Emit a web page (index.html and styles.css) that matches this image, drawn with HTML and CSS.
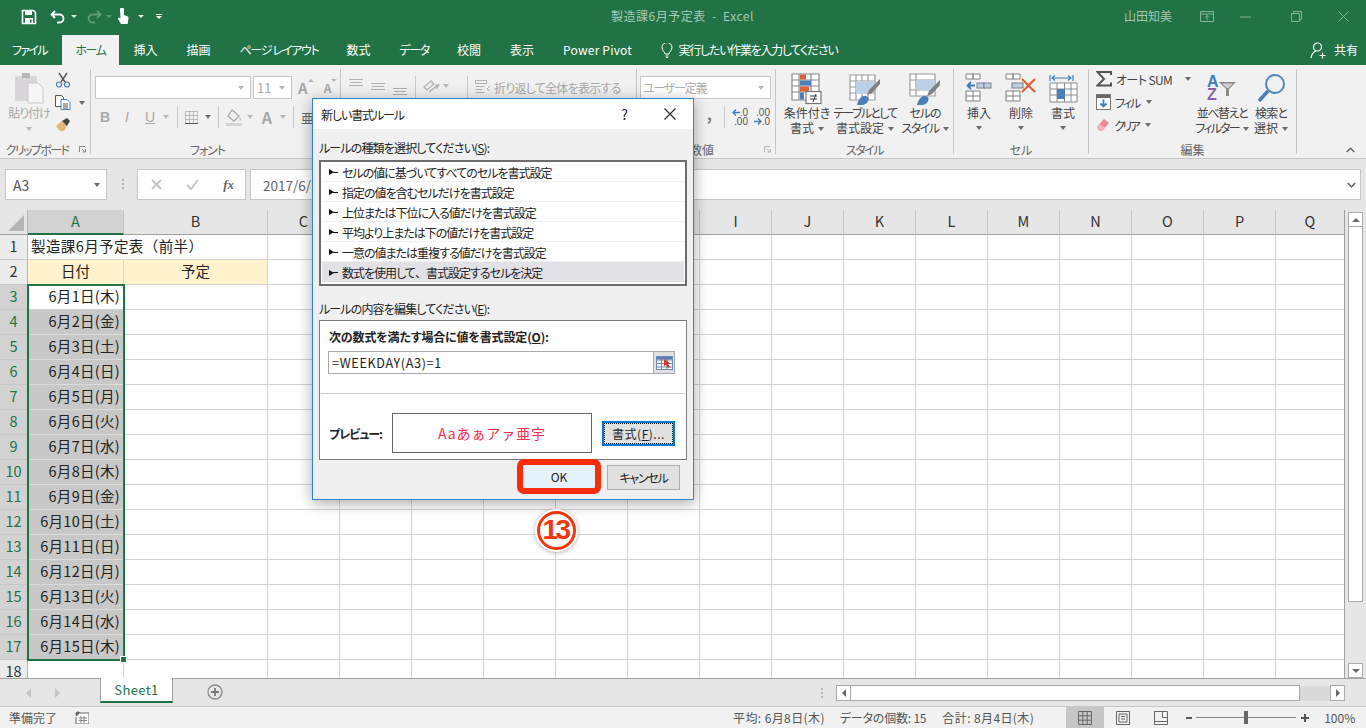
FILE: index.html
```html
<!DOCTYPE html>
<html lang="ja">
<head>
<meta charset="utf-8">
<title>製造課6月予定表 - Excel</title>
<link rel="stylesheet" href="styles.css">
</head>
<body>
<div class="app">

<header class="titlebar">
  <div class="qat">
    <svg class="q-save" width="16" height="16" viewBox="0 0 16 16"><path d="M1.5 1.5h11l2 2v11h-13z" fill="none" stroke="#fff" stroke-width="1.6"/><rect x="4" y="2" width="7" height="4" fill="#fff"/><rect x="4" y="9" width="8" height="6" fill="#fff"/><rect x="9" y="10.5" width="1.6" height="3" fill="#217346"/></svg>
    <svg class="q-undo" width="16" height="14" viewBox="0 0 16 14"><path d="M5 1L1.5 4.5 5 8M2 4.5h7.5a4 4 0 0 1 0 8H7" fill="none" stroke="#fff" stroke-width="1.8"/></svg>
    <span class="tcaret q-c1"></span>
    <svg class="q-redo" width="16" height="14" viewBox="0 0 16 14"><path d="M11 1l3.500 3.500L11 8M14 4.500H6.500a4 4 0 0 0 0 8H9" fill="none" stroke="#5d9c7b" stroke-width="1.800"/></svg>
    <span class="tcaret dim q-c2"></span>
    <svg class="q-touch" width="13" height="17" viewBox="0 0 13 17"><path d="M3 1.500a2 2 0 0 1 4 0V7l4 1.500.6 1.500-1 6H4L.8 10.500 2 9.500l1.500 1z" fill="#fff"/></svg>
    <span class="tcaret q-c3"></span>
    <span class="q-more"></span>
  </div>
  <div class="doc-title">製造課6月予定表&nbsp; - &nbsp;Excel</div>
  <div class="win-area">
    <span class="user">山田知美</span>
    <svg class="w-a" width="14" height="11" viewBox="0 0 14 11"><path d="M.5.5h13v10H.5zM.5 3h13M7 9V4.500M5 6.500l2-2 2 2" fill="none" stroke="#84b399"/></svg>
    <svg class="w-b" width="11" height="2" viewBox="0 0 11 2"><path d="M0 1h11" stroke="#84b399"/></svg>
    <svg class="w-c" width="11" height="11" viewBox="0 0 11 11"><path d="M.5 2.500h8v8h-8zM2.500 2.500v-2h8v8h-2" fill="none" stroke="#84b399"/></svg>
    <svg class="w-d" width="11" height="11" viewBox="0 0 11 11"><path d="M.5.500l10 10M10.500.500l-10 10" fill="none" stroke="#84b399"/></svg>
  </div>
</header>

<nav class="tabs">
  <span class="tab tab-file">ファイル</span>
  <span class="tab tab-active">ホーム</span>
  <span class="tab">挿入</span>
  <span class="tab">描画</span>
  <span class="tab tab-kana">ページ レイアウト</span>
  <span class="tab">数式</span>
  <span class="tab tab-kana">データ</span>
  <span class="tab">校閲</span>
  <span class="tab">表示</span>
  <span class="tab tab-pp">Power Pivot</span>
  <span class="tell">
    <svg width="12" height="15" viewBox="0 0 12 15"><path d="M4 11c0-2-3-3.500-3-6.500a5 5 0 0 1 10 0C11 7.500 8 9 8 11zM4.500 13h3M5 14.500h2" fill="none" stroke="#fff"/></svg>
    <span class="tell-text">実行したい作業を入力してください</span>
  </span>
  <span class="share">
    <svg width="17" height="17" viewBox="0 0 17 17"><circle cx="7.500" cy="5" r="4" fill="none" stroke="#fff" stroke-width="1.200"/><path d="M1 16c.5-4 2.500-6 5-7M12.500 10.500v6M9.500 13.500h6" fill="none" stroke="#fff" stroke-width="1.200"/></svg>
    共有
  </span>
</nav>

<section class="ribbon">

  <div class="group g-clip">
    <div class="group-body clip-body">
      <div class="big paste">
        <svg width="30" height="32" viewBox="0 0 30 32"><rect x="1" y="4" width="22" height="25" fill="#d8d6d8"/><rect x="8" y="1" width="8" height="5" fill="#b9b7b9"/><path d="M14 11h10l5 5v15H14z" fill="#f6f6f6" stroke="#c9c9c9"/></svg>
        <span class="lbl dis ls-10">貼り付け</span>
        <span class="caret dis-c paste-c"></span>
      </div>
      <div class="clip-tools">
        <svg width="16" height="16" viewBox="0 0 16 16"><path d="M4 1l6 9M12 1L6 10" stroke="#555" stroke-width="1.400" fill="none"/><circle cx="4" cy="12.500" r="2.500" fill="none" stroke="#4a7fb5" stroke-width="1.200"/><circle cx="12" cy="12.500" r="2.500" fill="none" stroke="#4a7fb5" stroke-width="1.200"/></svg>
        <div class="copy-row">
          <svg width="16" height="15" viewBox="0 0 16 15"><path d="M.5.500h6l2 2v9h-8z" fill="#fff" stroke="#555"/><path d="M6 4.500h6l3 3v7H6z" fill="#fff" stroke="#4a7fb5"/><path d="M8 9h5M8 11h5M8 13h5" stroke="#555"/></svg>
          <span class="caret copy-c"></span>
        </div>
        <svg width="16" height="15" viewBox="0 0 16 15"><path d="M1 9l6-5 5 5-3 5H5z" fill="#e5b777"/><path d="M7 4l5 5 3-5-3-3z" fill="#444"/></svg>
      </div>
    </div>
    <div class="group-label pad-exp ls-16">クリップボード</div>
    <svg class="expander" width="7" height="7" viewBox="0 0 7 7"><path d="M.5 6V.5H6M3 3l3 3M3.500 6H6.500V3" fill="none" stroke="#8a8a8a"/></svg>
  </div>

  <div class="group g-font">
    <div class="group-body col">
      <div class="frow">
        <span class="combo c-font"><span class="caret dis-c"></span></span>
        <span class="combo c-size"><span class="size-val">11</span><span class="caret dis-c"></span></span>
        <span class="grow-a">A</span><span class="tiny-up"></span>
        <span class="shrink-a">A</span><span class="tiny-dn"></span>
      </div>
      <div class="frow f2">
        <b class="ib">B</b><i class="ib i2">I</i><u class="ib i3">U</u>
        <span class="caret dis-c m3"></span>
        <span class="vr m8"></span>
        <svg class="m7" width="13" height="13" viewBox="0 0 13 13"><path d="M.5.500h12v12H.5zM4.500.500v12M8.500.500v12M.500 4.500h12M.500 8.500h12" fill="none" stroke="#8c8c8c" stroke-dasharray="1 1"/><path d="M0 12.500h13" stroke="#555"/></svg>
        <span class="caret m7"></span>
        <span class="vr m7"></span>
        <svg class="m7" width="16" height="17" viewBox="0 0 16 17"><path d="M6 1l7 6-5 5-6-5z" fill="none" stroke="#a9a9a9" stroke-width="1.300"/><path d="M14 8c1 2 1.500 3 .5 3.500S13 10 14 8z" fill="#bbb"/><rect y="14" width="16" height="3" fill="#d6d4d6"/></svg>
        <span class="caret dis-c m5"></span>
        <b class="big-a m6">A</b>
        <span class="caret dis-c m5"></span>
        <span class="vr m7"></span>
        <span class="ak m7">亜</span>
      </div>
    </div>
    <div class="group-label pad-exp ls-10">フォント</div>
  </div>

  <div class="group g-align">
    <div class="group-body align-body">
      <svg class="al a1" width="14" height="8" viewBox="0 0 14 8"><path d="M0 .500h14M1 3.500h12M0 6.500h14" stroke="#b0b0b0"/></svg>
      <svg class="al a2" width="14" height="8" viewBox="0 0 14 8"><path d="M0 .500h14M1 3.500h12M0 6.500h14" stroke="#b0b0b0"/></svg>
      <svg class="al a3" width="14" height="8" viewBox="0 0 14 8"><path d="M0 .500h14M1 3.500h12M0 6.500h14" stroke="#b0b0b0"/></svg>
      <span class="vr a-vr"></span>
      <svg class="al a4" width="17" height="15" viewBox="0 0 17 15"><path d="M1 8l7-6 3 3-7 6zM6 13l9-7M13 10l3-4-4 0" fill="none" stroke="#b0b0b0" stroke-width="1.200"/></svg>
      <span class="caret dis-c a5"></span>
      <span class="vr a-vr2"></span>
      <svg class="al a6" width="16" height="14" viewBox="0 0 16 14"><path d="M.500.500h11v3H.500zM.500 6.500h9M.500 9.500h7M.500 12.500h9" fill="none" stroke="#b0b0b0"/><path d="M15 6l-3 3 3 2" fill="none" stroke="#b0b0b0"/></svg>
      <span class="wrap-lbl">折り返して全体を表示する</span>
    </div>
    <div class="group-label pad-exp"></div>
  </div>

  <div class="group g-num">
    <div class="group-body col num-body">
      <span class="combo c-num"><span class="num-val">ユーザー定義</span><span class="caret dis-c"></span></span>
      <div class="num-row">
        <span class="comma">,</span>
        <span class="vr nvr"></span>
        <span class="dec">
          <span class="dec-line"><svg width="8" height="7" viewBox="0 0 8 7"><path d="M8 3.500H1M4 .5L1 3.500l3 3" fill="none" stroke="#3f7cbc" stroke-width="1.300"/></svg>.0</span>
          <span class="dec-line">.00</span>
        </span>
        <span class="dec d2">
          <span class="dec-line">.00</span>
          <span class="dec-line"><svg width="8" height="7" viewBox="0 0 8 7"><path d="M0 3.500h7M4 .5l3 3-3 3" fill="none" stroke="#3f7cbc" stroke-width="1.300"/></svg>.0</span>
        </span>
      </div>
    </div>
    <div class="group-label pad-exp2">数値</div>
    <svg class="expander" width="7" height="7" viewBox="0 0 7 7"><path d="M.5 6V.5H6M3 3l3 3M3.500 6H6.500V3" fill="none" stroke="#b0b0b0"/></svg>
  </div>

  <div class="group g-style">
    <div class="group-body bigs">
      <div class="big b-cond">
        <svg width="32" height="32" viewBox="0 0 32 32"><path d="M1 1h27v26H1zM8 1v26M20 1v26M1 7h27M1 13h27M1 19h27" fill="#fff" stroke="#8a8a8a" stroke-width="1.200"/><rect x="9" y="1.500" width="6" height="5" fill="#d9623b"/><rect x="9" y="7.500" width="11" height="5" fill="#4a7fb8"/><rect x="9" y="13.500" width="9" height="5" fill="#d9623b"/><rect x="9" y="19.500" width="4" height="7" fill="#4a7fb8"/><rect x="15" y="18.500" width="15" height="12" fill="#fff" stroke="#777" stroke-width="1.200"/><path d="M19 23h7M19 26h7M25 21l-3 8" stroke="#333" fill="none"/></svg>
        <span class="lbl">条件付き</span>
        <span class="lbl">書式<span class="caret lc"></span></span>
      </div>
      <div class="big b-table">
        <svg width="32" height="32" viewBox="0 0 32 32"><path d="M1 2h25v25H1zM7 2v25M13 2v25M19 2v25M1 8h25M1 14h25M1 20h25" fill="#fff" stroke="#9b9b9b" stroke-width="1.200"/><rect x="7" y="8" width="18" height="13" fill="#bcd0e6"/><path d="M31 6L20 17l-2 5 5-2L31 11z" fill="#808080"/><path d="M8 32c1-5 5-10 9-9 3 1 3 3 2 5-1 3-3 3-5 4z" fill="#4a7fb8"/></svg>
        <span class="lbl ls-17">テーブルとして</span>
        <span class="lbl">書式設定<span class="caret lc"></span></span>
      </div>
      <div class="big b-cell">
        <svg width="32" height="32" viewBox="0 0 32 32"><path d="M1 1h25v22H1zM7 1v22M1 7h25M1 17h25" fill="#fff" stroke="#9b9b9b" stroke-width="1.200"/><rect x="7" y="7" width="19" height="10" fill="#bcd0e6"/><path d="M31 7L20 18l-2 5 5-2L31 12z" fill="#808080"/><path d="M8 32c1-5 5-10 9-9 3 1 3 3 2 5-1 3-3 3-5 4z" fill="#4a7fb8"/></svg>
        <span class="lbl ls-10">セルの</span>
        <span class="lbl ls-15">スタイル<span class="caret lc"></span></span>
      </div>
    </div>
    <div class="group-label ls-15">スタイル</div>
  </div>

  <div class="group g-cells">
    <div class="group-body bigs">
      <div class="big b-ins">
        <svg width="28" height="30" viewBox="0 0 28 30"><path d="M1 1h7v5H1zM8 1h7v5H8zM1 18h14v10H1zM8 18v10M1 23h14" fill="#fff" stroke="#808080"/><rect x="12" y="10" width="7" height="5" fill="#bcd0e6" stroke="#808080"/><rect x="19" y="10" width="7" height="5" fill="#bcd0e6" stroke="#808080"/><path d="M10 12.500H3M6 9l-3.500 3.500L6 16" fill="none" stroke="#3f7cbc" stroke-width="1.800"/></svg>
        <span class="lbl">挿入</span>
        <span class="caret bc"></span>
      </div>
      <div class="big b-ins">
        <svg width="32" height="30" viewBox="0 0 32 30"><path d="M1 1h7v5H1zM8 1h7v5H8zM1 18h14v10H1zM8 18v10M1 23h14" fill="#fff" stroke="#808080"/><rect x="7" y="10" width="11" height="5" fill="#bcd0e6" stroke="#808080"/><path d="M17 6l13 13M30 6L17 19" stroke="#d9623b" stroke-width="2.200" fill="none"/></svg>
        <span class="lbl">削除</span>
        <span class="caret bc"></span>
      </div>
      <div class="big b-ins">
        <svg width="29" height="30" viewBox="0 0 29 30"><path d="M1 2v6M24 2v6M3 5h19M6 2.500L3 5l3 2.500M19 2.500L22 5l-3 2.500" fill="none" stroke="#3f7cbc" stroke-width="1.200"/><path d="M1 10h27v19H1zM8 10v19M15.500 10v19M22 10v19M1 16h27M1 22h27" fill="#fff" stroke="#8a8a8a"/><rect x="8" y="16" width="8" height="10" fill="#4a7fb8"/></svg>
        <span class="lbl">書式</span>
        <span class="caret bc"></span>
      </div>
    </div>
    <div class="group-label">セル</div>
  </div>

  <div class="group g-edit">
    <div class="group-body edit-body">
      <div class="edit-col">
        <div class="erow">
          <svg width="16" height="16" viewBox="0 0 16 16"><path d="M15 4V1H1.500l6.500 7-6.500 6.500H15v-3" fill="none" stroke="#555" stroke-width="2"/></svg>
          <span class="lbl ls-06">オート SUM</span><span class="caret auto-c"></span>
        </div>
        <div class="erow">
          <svg width="15" height="16" viewBox="0 0 15 16"><rect x=".5" y=".5" width="14" height="15" fill="#fff" stroke="#777"/><rect x="1" y="1" width="13" height="3" fill="#666"/><path d="M7.500 5.500v7M4.500 9.500l3 3 3-3" fill="none" stroke="#3f7cbc" stroke-width="1.800"/></svg>
          <span class="lbl ls-20">フィル</span><span class="caret e-c"></span>
        </div>
        <div class="erow">
          <svg width="14" height="14" viewBox="0 0 14 14"><path d="M1 9l7-8 5 4-7 8H3z" fill="#ec8a9b"/><path d="M1 9l3-3 5 4-3 3H3z" fill="#f3b4bf"/></svg>
          <span class="lbl ls-25">クリア</span><span class="caret e-c"></span>
        </div>
      </div>
      <div class="big b-sort">
        <svg width="32" height="32" viewBox="0 0 32 32"><text x="1" y="14" class="az-a">A</text><text x="1" y="27" class="az-z">Z</text><path d="M13 9h17l-7 7v7h-3v-7z" fill="#8a8a8a"/><path d="M16 10.500h11l-4.500 4.500h-2z" fill="#d0d0d0"/></svg>
        <span class="lbl ls-14">並べ替えと</span>
        <span class="lbl ls-18">フィルター<span class="caret lc"></span></span>
      </div>
      <div class="big b-find">
        <svg width="30" height="32" viewBox="0 0 30 32"><circle cx="19" cy="11" r="9" fill="none" stroke="#4a86c0" stroke-width="2"/><path d="M12 18L3 28" stroke="#4a7fb0" stroke-width="3.500"/></svg>
        <span class="lbl ls-09">検索と</span>
        <span class="lbl">選択<span class="caret lc"></span></span>
      </div>
    </div>
    <div class="group-label">編集</div>
  </div>

  <svg class="collapse" width="9" height="6" viewBox="0 0 9 6"><path d="M.7 5l3.800-3.800L8.300 5" fill="none" stroke="#666" stroke-width="1.500"/></svg>
</section>

<section class="fbar">
  <div class="namebox"><span>A3</span><span class="caret nb-c"></span></div>
  <div class="fdots"></div>
  <div class="fbtns">
    <svg width="11" height="11" viewBox="0 0 11 11"><path d="M1 1l9 9M10 1l-9 9" stroke="#c4c4c4" stroke-width="1.800"/></svg>
    <svg width="13" height="11" viewBox="0 0 13 11"><path d="M1 6l4 4 7-9" fill="none" stroke="#c4c4c4" stroke-width="2"/></svg>
    <span class="fx">fx</span>
  </div>
  <div class="finput"><span>2017/6/1</span>
    <svg class="fchev" width="9" height="6" viewBox="0 0 9 6"><path d="M.7 1l3.800 3.800L8.300 1" fill="none" stroke="#666" stroke-width="1.600"/></svg>
  </div>
</section>

<section class="main">
  <div class="sheet">
    <div class="colheads">
      <div class="corner"><span></span></div>
      <div class="ch ch-sel">A</div><div class="ch">B</div><div class="ch">C</div><div class="ch"></div><div class="ch"></div><div class="ch"></div><div class="ch"></div><div class="ch"></div><div class="ch">I</div><div class="ch">J</div><div class="ch">K</div><div class="ch">L</div><div class="ch">M</div><div class="ch">N</div><div class="ch">O</div><div class="ch">P</div><div class="ch ch-last">Q</div>
    </div>
    <div class="row"><div class="rh">1</div><div class="cell ca title-cell">製造課6月予定表（前半）</div><div class="cell cb no-l"></div><div class="rest"></div></div>
    <div class="row"><div class="rh">2</div><div class="cell ca hd">日付</div><div class="cell cb hd">予定</div><div class="rest"></div></div>
    <div class="row"><div class="rh sel">3</div><div class="cell ca date">6月1日(木)</div><div class="cell cb"></div><div class="rest"></div></div>
    <div class="row"><div class="rh sel">4</div><div class="cell ca date gray">6月2日(金)</div><div class="cell cb"></div><div class="rest"></div></div>
    <div class="row"><div class="rh sel">5</div><div class="cell ca date gray">6月3日(土)</div><div class="cell cb"></div><div class="rest"></div></div>
    <div class="row"><div class="rh sel">6</div><div class="cell ca date gray">6月4日(日)</div><div class="cell cb"></div><div class="rest"></div></div>
    <div class="row"><div class="rh sel">7</div><div class="cell ca date gray">6月5日(月)</div><div class="cell cb"></div><div class="rest"></div></div>
    <div class="row"><div class="rh sel">8</div><div class="cell ca date gray">6月6日(火)</div><div class="cell cb"></div><div class="rest"></div></div>
    <div class="row"><div class="rh sel">9</div><div class="cell ca date gray">6月7日(水)</div><div class="cell cb"></div><div class="rest"></div></div>
    <div class="row"><div class="rh sel">10</div><div class="cell ca date gray">6月8日(木)</div><div class="cell cb"></div><div class="rest"></div></div>
    <div class="row"><div class="rh sel">11</div><div class="cell ca date gray">6月9日(金)</div><div class="cell cb"></div><div class="rest"></div></div>
    <div class="row"><div class="rh sel">12</div><div class="cell ca date gray">6月10日(土)</div><div class="cell cb"></div><div class="rest"></div></div>
    <div class="row"><div class="rh sel">13</div><div class="cell ca date gray">6月11日(日)</div><div class="cell cb"></div><div class="rest"></div></div>
    <div class="row"><div class="rh sel">14</div><div class="cell ca date gray">6月12日(月)</div><div class="cell cb"></div><div class="rest"></div></div>
    <div class="row"><div class="rh sel">15</div><div class="cell ca date gray">6月13日(火)</div><div class="cell cb"></div><div class="rest"></div></div>
    <div class="row"><div class="rh sel">16</div><div class="cell ca date gray">6月14日(水)</div><div class="cell cb"></div><div class="rest"></div></div>
    <div class="row"><div class="rh sel">17</div><div class="cell ca date gray">6月15日(木)</div><div class="cell cb"></div><div class="rest"></div></div>
    <div class="row"><div class="rh">18</div><div class="cell ca"></div><div class="cell cb"></div><div class="rest"></div></div>
    <div class="selection"><span class="handle"></span></div>
  </div>
  <div class="vscroll">
    <div class="sb-btn"><span class="up"></span></div>
    <div class="sb-thumb"></div>
    <div class="sb-track"></div>
    <div class="sb-btn"><span class="dn"></span></div>
  </div>
</section>

<section class="sheetbar">
  <span class="nav-l"></span><span class="nav-r"></span>
  <div class="sheettab">Sheet1</div>
  <svg class="addsheet" width="16" height="16" viewBox="0 0 16 16"><circle cx="8" cy="8" r="7" fill="none" stroke="#8a8a8a" stroke-width="1.300"/><path d="M8 4v8M4 8h8" stroke="#777" stroke-width="1.800"/></svg>
  <div class="hdots"></div>
  <div class="hscroll">
    <div class="hbtn"><span class="lt"></span></div>
    <div class="hthumb"></div>
    <div class="htrack"></div>
    <div class="hbtn"><span class="rt"></span></div>
  </div>
</section>

<footer class="status">
  <span class="ready">準備完了</span>
  <svg class="macro" width="14" height="13" viewBox="0 0 14 13"><circle cx="3" cy="3" r="2.500" fill="#666"/><path d="M5 2h9v11H1V6" fill="#fff" stroke="#666"/><path d="M4 7h8M4 9.500h8M6 5v7M9 5v7" stroke="#888"/></svg>
  <span class="stat s1">平均: 6月8日(木)</span>
  <span class="stat s2">データの個数: 15</span>
  <span class="stat s3">合計: 8月4日(木)</span>
  <span class="view view-on"><svg width="14" height="14" viewBox="0 0 14 14"><path d="M.5.500h13v13H.5zM4.800.500v13M9.200.500v13M.500 4.800h13M.500 9.200h13" fill="none" stroke="#666"/></svg></span>
  <span class="view"><svg width="14" height="14" viewBox="0 0 14 14"><path d="M.5.500h13v13H.5zM3 3h8v8H3zM5 5.500h4M5 8h4" fill="none" stroke="#666"/></svg></span>
  <span class="view"><svg width="14" height="14" viewBox="0 0 14 14"><path d="M.5.500h13v13H.5zM.500 10.500h13M8.500.500v6h5" fill="none" stroke="#666"/></svg></span>
  <span class="zminus"></span>
  <span class="zslider"><span class="zthumb"></span></span>
  <span class="zplus"></span>
  <span class="zoomval">100%</span>
</footer>

</div>

<div class="dialog">
  <div class="dlg-title">
    <span class="dlg-name">新しい書式ルール</span>
    <span class="dlg-help">?</span>
    <svg class="dlg-close" width="12" height="12" viewBox="0 0 12 12"><path d="M.5.500l11 11M11.500.500l-11 11" stroke="#222" stroke-width="1.100"/></svg>
  </div>
  <div class="dlg-body">
    <div class="dlg-label l-top">ルールの種類を選択してください(<u>S</u>):</div>
    <ul class="rule-list">
      <li><span class="arr"></span>セルの値に基づいてすべてのセルを書式設定</li>
      <li><span class="arr"></span>指定の値を含むセルだけを書式設定</li>
      <li><span class="arr"></span>上位または下位に入る値だけを書式設定</li>
      <li><span class="arr"></span>平均より上または下の値だけを書式設定</li>
      <li><span class="arr"></span>一意の値または重複する値だけを書式設定</li>
      <li class="picked"><span class="arr"></span>数式を使用して<span class="fw">、</span>書式設定するセルを決定</li>
    </ul>
    <div class="dlg-label l-edit">ルールの内容を編集してください(<u>E</u>):</div>
    <div class="rule-box">
      <div class="formula-label">次の数式を満たす場合に値を書式設定(<u>O</u>):</div>
      <div class="formula-input">
        <span class="formula-text">=WEEKDAY(A3)=1</span>
        <span class="ref-btn"><svg width="17" height="14" viewBox="0 0 17 14"><rect x=".5" y=".5" width="16" height="13" fill="#fff" stroke="#6a8cb5"/><path d="M.5 4h16M.500 7.500h16M.500 11h16M5.500 1v12M11 1v12" stroke="#6a8cb5"/><rect x="1" y="1" width="15" height="2.500" fill="#5a7fae"/><path d="M8 3l6 4-2 1 2 3-2 1-2-3-2 1z" fill="#d23b2e"/></svg></span>
      </div>
      <div class="rule-sep"></div>
      <div class="preview-row">
        <span class="preview-label">プレビュー:</span>
        <span class="preview-box">Aaあぁアァ亜宇</span>
        <span class="fmt-btn"><span>書式(<u>F</u>)...</span></span>
      </div>
    </div>
    <div class="dlg-actions">
      <span class="btn ok">OK</span>
      <span class="btn cancel">キャンセル</span>
    </div>
  </div>
</div>
<div class="step-badge">13</div>
</body>
</html>
```

FILE: styles.css
```css
* { box-sizing: border-box; }
html, body { margin: 0; padding: 0; }
body {
  width: 1366px; height: 728px; overflow: hidden; position: relative;
  font-family: "Noto Sans CJK JP", "Noto Sans", sans-serif;
  font-size: 12px; color: #444; background: #e6e6e6;
  font-feature-settings: "palt";
}
.app { display: flex; flex-direction: column; height: 728px; }
svg { display: block; flex: none; }

.ls-06 { letter-spacing: -.6px; }
.ls-09 { letter-spacing: -.9px; }
.ls-10 { letter-spacing: -1px; }
.ls-14 { letter-spacing: -1.4px; }
.ls-15 { letter-spacing: -1.5px; }
.ls-16 { letter-spacing: -1.6px; }
.ls-17 { letter-spacing: -1.7px; }
.ls-18 { letter-spacing: -1.8px; }
.ls-20 { letter-spacing: -2px; }
.ls-25 { letter-spacing: -2.5px; }

/* Title bar */
.titlebar { height: 35px; background: #217346; display: flex; align-items: center; position: relative; flex: none; padding-bottom: 2px; }
.qat { display: flex; align-items: center; padding-left: 21px; width: 400px; }
.q-undo { margin-left: 13px; }
.q-c1 { margin-left: 5px; }
.q-redo { margin-left: 9px; }
.q-c2 { margin-left: 4px; }
.q-touch { margin-left: 5px; }
.q-c3 { margin-left: 8px; }
.q-more { margin-left: 12px; width: 6px; height: 5px; border-top: 1px solid #fff; position: relative; }
.q-more::after { content: ""; position: absolute; left: 0; top: 1px; border: 3px solid transparent; border-top: 3px solid #fff; border-bottom: 0; }
.tcaret { width: 0; height: 0; border: 3px solid transparent; border-top: 3px solid #dfeee6; border-bottom: 0; }
.tcaret.dim { border-top-color: #5d9c7b; }
.doc-title { margin: 0 0 3px 211px; color: #a6c8b5; font-size: 12px; white-space: nowrap; letter-spacing: .5px; }
.win-area { margin-left: auto; display: flex; align-items: center; padding-right: 17px; color: #a6c8b5; }
.user { font-size: 12px; margin: 0 28px 3px 0; }
.w-b { margin-left: 26px; }
.w-c { margin-left: 40px; }
.w-d { margin-left: 36px; }

/* Tabs */
.tabs { height: 30px; background: #217346; display: flex; align-items: stretch; color: #fff; flex: none; line-height: 30px; white-space: nowrap; }
.tab { padding: 0 14.500px; }
.tab-file { width: 62px; padding: 0 0 0 12px; letter-spacing: -1.700px; }
.tab-active { background: #f1f1f1; color: #217346; padding: 0; width: 57px; text-align: center; letter-spacing: -1.500px; }
.tab-kana { letter-spacing: -1.300px; margin-right: -1px; }
.tab-pp { letter-spacing: .2px; }
.tell { margin-left: 14px; display: flex; align-items: center; gap: 6px; }
.tell-text { letter-spacing: -1.250px; }
.share { margin-left: auto; padding-right: 8px; display: flex; align-items: center; gap: 7px; }

/* Ribbon */
.ribbon { height: 94px; background: #f1f1f1; border-bottom: 1px solid #c6c6c6; display: flex; padding-top: 4px; position: relative; flex: none; }
.group { height: 85px; display: flex; flex-direction: column; border-right: 1px solid #c6c6c6; position: relative; flex: none; }
.group-body { flex: 1; display: flex; min-height: 0; }
.col { flex-direction: column; }
.group-label { height: 14px; line-height: 14px; text-align: center; color: #666; font-size: 12px; white-space: nowrap; margin-bottom: -3px; }
.pad-exp { padding-right: 16px; }
.pad-exp2 { padding-right: 8px; }
.expander { position: absolute; right: 4px; bottom: 1px; }
.g-clip { width: 91px; }
.g-font { width: 250px; }
.g-align { width: 296px; }
.g-num { width: 139px; }
.g-style { width: 178px; }
.g-cells { width: 135px; }
.g-edit { width: 208px; }
.lbl { line-height: 15px; height: 15px; white-space: nowrap; display: block; }
.dis { color: #a8a8a8; }
.big { display: flex; flex-direction: column; align-items: center; }
.caret { display: inline-block; width: 0; height: 0; border: 3.5px solid transparent; border-top: 4px solid #6a6a6a; border-bottom: 0; flex: none; }
.dis-c { border-top-color: #b8b8b8; }
.lc { margin-left: 4px; vertical-align: 2px; }
.bc { margin-top: 6px; }
.vr { display: block; width: 1px; height: 22px; background: #c9c9c9; flex: none; }
.m3 { margin-left: 3px; } .m5 { margin-left: 5px; } .m6 { margin-left: 6px; } .m7 { margin-left: 7px; } .m8 { margin-left: 8px; }

.clip-body { padding-top: 3px; }
.paste { width: 54px; padding-left: 4px; }
.paste .lbl { margin-top: 1px; }
.paste-c { margin-top: 7px; }
.clip-tools { display: flex; flex-direction: column; padding-left: 1px; gap: 7px; }
.copy-row { display: flex; align-items: center; gap: 7px; }
.copy-c { margin-left: 1px; }

.frow { display: flex; align-items: center; padding-left: 4px; height: 23px; margin-top: 7px; }
.f2 { margin-top: 6px; height: 24px; padding-left: 4px; color: #a8a8a8; }
.combo { display: flex; align-items: center; justify-content: flex-end; background: #fff; border: 1px solid #c6c6c6; height: 23px; padding-right: 6px; flex: none; }
.c-font { width: 156px; }
.c-size { width: 39px; margin-left: 2px; justify-content: space-between; padding-left: 3px; color: #a8a8a8; font-size: 13px; }
.grow-a, .shrink-a { color: #a8a8a8; font-weight: 700; }
.grow-a { font-size: 15px; margin-left: 6px; }
.shrink-a { font-size: 12px; margin-left: 10px; }
.tiny-up, .tiny-dn { width: 0; height: 0; border: 3px solid transparent; align-self: flex-start; margin-top: 3px; }
.tiny-up { border-bottom: 3px solid #b8b8b8; border-top: 0; }
.tiny-dn { border-top: 3px solid #b8b8b8; border-bottom: 0; }
.ib { width: 20px; text-align: center; font-size: 14px; color: #a8a8a8; flex: none; font-family: "Liberation Sans", sans-serif; }
.i2 { margin-left: 2px; }
.i3 { margin-left: 3px; }
.big-a { width: 16px; text-align: center; font-size: 16px; color: #a8a8a8; flex: none; }
.ak { font-size: 13px; color: #666; }

.al { flex: none; }
.align-body { padding-left: 8px; padding-top: 10px; align-items: flex-start; }
.a2 { margin-left: 8px; margin-top: 4px; }
.a3 { margin-left: 8px; margin-top: 9px; }
.a-vr { margin-left: 8px; margin-top: -3px; }
.a4 { margin-left: 7px; margin-top: 0; }
.a5 { margin-left: 3px; margin-top: 5px; }
.a-vr2 { margin-left: 18px; margin-top: -3px; }
.a6 { margin-left: 7px; margin-top: 1px; }
.wrap-lbl { margin-left: 3px; color: #a8a8a8; white-space: nowrap; line-height: 18px; letter-spacing: -.750px; }

.num-body { padding-top: 7px; padding-left: 3px; }
.c-num { width: 131px; justify-content: space-between; padding-left: 2px; color: #b0b0b0; }
.num-val { letter-spacing: -1.200px; }
.num-row { display: flex; align-items: center; padding-top: 6px; height: 30px; justify-content: flex-end; padding-right: 5px; }
.comma { font-weight: 700; color: #777; font-size: 15px; margin-right: 12px; line-height: 14px; padding-bottom: 6px; }
.nvr { margin-right: 7px; }
.dec { display: flex; flex-direction: column; font: 10px/9px "Liberation Sans", sans-serif; color: #555; width: 16px; }
.dec-line { display: flex; align-items: center; justify-content: flex-end; height: 9px; }
.d2 { margin-left: 6px; }

.bigs { padding-top: 4px; }
.b-cond { margin-left: 5px; width: 52px; }
.b-table { width: 64px; }
.b-cell { width: 56px; }
.b-ins { width: 42px; }
.b-ins:first-child { margin-left: 4px; }
.b-ins .lbl { margin-top: 2px; }

.edit-body { padding-top: 0; }
.edit-col { width: 107px; padding-left: 7px; display: flex; flex-direction: column; gap: 7px; padding-top: 2px; }
.erow { display: flex; align-items: center; height: 16px; gap: 4px; }
.auto-c { margin-left: 9px; }
.e-c { margin-left: 3px; }
.b-sort { width: 52px; padding-top: 4px; }
.b-find { width: 46px; padding-top: 4px; }
.az-a, .az-z { font: 700 16px "Liberation Sans", sans-serif; }
.az-a { fill: #3f7cbc; }
.az-z { fill: #8a5fb0; }
.collapse { position: absolute; right: 11px; bottom: 5px; }

/* Formula bar */
.fbar { height: 51px; background: #e6e6e6; display: flex; padding: 10px 5px 0; flex: none; align-items: flex-start; }
.namebox, .fbtns, .finput { height: 31px; background: #fff; border: 1px solid #c6c6c6; display: flex; align-items: center; }
.namebox { width: 102px; padding: 0 6px 0 7px; justify-content: space-between; font-size: 14px; color: #555; }
.fdots { width: 2px; height: 10px; margin: 10px 13px 0 15px; background: repeating-linear-gradient(#b5b5b5 0 2px, transparent 2px 4px); }
.fbtns { width: 109px; justify-content: space-between; padding: 0 11px 0 13px; }
.fx { font: italic 700 13px "Liberation Serif", serif; color: #666; }
.finput { flex: 1; margin-left: 4px; padding: 0 4px 0 12px; justify-content: space-between; font-size: 13.500px; color: #666; }

/* Sheet */
.main { height: 468px; display: flex; flex: none; overflow: hidden; }
.sheet { width: 1345px; position: relative; background: #fff; border-right: 1px solid #a0a0a0; flex: none; }
.colheads { display: grid; grid-template-columns: 28px 96px 144px repeat(14, 72px) 68px; height: 25px; background: #e6e6e6; }
.corner { border-right: 1px solid #b5b5b5; border-bottom: 1px solid #a0a0a0; position: relative; }
.corner span { position: absolute; right: 3px; bottom: 3px; width: 0; height: 0; border-left: 16px solid transparent; border-bottom: 16px solid #b5b5b5; }
.ch { font-size: 14.500px; color: #333; text-align: center; line-height: 22px; border-right: 1px solid #c4c4c4; border-bottom: 1px solid #a0a0a0; font-feature-settings: normal; }
.ch-last { border-right: 0; }
.ch-sel { background: #d2d2d2; color: #217346; border-bottom: 2px solid #217346; }
.row { display: grid; grid-template-columns: 28px 96px 144px 1fr; height: 25px; }
.rh { background: #ececec; border-right: 1px solid #b5b5b5; border-bottom: 1px solid #c6c6c6; text-align: center; font-size: 14.500px; line-height: 22px; color: #333; font-feature-settings: normal; }
.rh.sel { background: #d2d2d2; color: #217346; }
.cell { border-right: 1px solid #d4d4d4; border-bottom: 1px solid #d4d4d4; font-size: 14.500px; line-height: 22px; color: #222; white-space: nowrap; font-feature-settings: normal; }
.no-l { border-left: 0; }
.title-cell { border-right-color: transparent; padding-left: 3px; overflow: visible; letter-spacing: .4px; }
.hd { background: #fff2cc; text-align: center; }
.date { text-align: right; padding-right: 3px; letter-spacing: .3px; }
.gray { background: #c8c8c8; border-bottom-color: #dcdcdc; }
.rest { background: repeating-linear-gradient(to right, transparent 0 71px, #d4d4d4 71px 72px); border-bottom: 1px solid #d4d4d4; }
.selection { position: absolute; left: 27px; top: 74px; width: 98px; height: 377px; border: 2px solid #217346; pointer-events: none; }
.handle { position: absolute; right: -4px; bottom: -4px; width: 7px; height: 7px; background: #217346; border: 1px solid #fff; }

.vscroll { flex: 1; display: flex; flex-direction: column; padding: 2px 3px 0 3px; background: #e6e6e6; }
.sb-btn { height: 15px; background: #fff; border: 1px solid #ababab; display: flex; align-items: center; justify-content: center; flex: none; }
.up { width: 0; height: 0; border: 4px solid transparent; border-bottom: 4px solid #6a6a6a; border-top: 0; }
.dn { width: 0; height: 0; border: 4px solid transparent; border-top: 4px solid #6a6a6a; border-bottom: 0; }
.sb-thumb { height: 375px; background: #fff; border: 1px solid #ababab; border-top: 0; flex: none; }
.sb-track { flex: 1; }

.sheetbar { height: 28px; background: #e6e6e6; border-top: 1px solid #a0a0a0; display: flex; flex: none; position: relative; }
.nav-l, .nav-r { width: 0; height: 0; margin-top: 9px; border: 5px solid transparent; }
.nav-l { margin-left: 26px; border-right: 5px solid #c4c4c4; border-left: 0; }
.nav-r { margin-left: 24px; border-left: 5px solid #c4c4c4; border-right: 0; }
.sheettab { margin-left: 40px; width: 73px; height: 25px; background: #fff; border: 1px solid #a0a0a0; border-top: 0; border-bottom: 2px solid #217346; color: #217346; text-align: center; font-size: 13px; line-height: 21px; letter-spacing: .4px; margin-top: -1px; padding-top: 1px; }
.addsheet { margin: 5px 0 0 34px; }
.hdots { width: 2px; height: 10px; margin: 9px 0 0 598px; background: repeating-linear-gradient(#b5b5b5 0 2px, transparent 2px 4px); }
.hscroll { margin: 6px 0 0 13px; width: 509px; height: 16px; display: flex; }
.hbtn { width: 15px; background: #fff; border: 1px solid #ababab; display: flex; align-items: center; justify-content: center; flex: none; }
.lt { width: 0; height: 0; border: 4px solid transparent; border-right: 4px solid #6a6a6a; border-left: 0; }
.rt { width: 0; height: 0; border: 4px solid transparent; border-left: 4px solid #6a6a6a; border-right: 0; }
.hthumb { width: 449px; background: #fff; border: 1px solid #ababab; border-left: 0; }
.htrack { flex: 1; background: #d9d9d9; border-top: 1px solid #e6e6e6; }

/* Status */
.status { flex: 1; background: #f1f1f1; border-top: 1px solid #c6c6c6; display: flex; align-items: center; color: #555; white-space: nowrap; }
.ready { margin-left: 9px; }
.macro { margin-left: 18px; }
.stat { flex: none; letter-spacing: .4px; }
.s1 { margin-left: 644px; }
.s2 { margin-left: 15px; letter-spacing: -.2px; }
.s3 { margin-left: 16px; }
.view { width: 38px; height: 21px; display: flex; align-items: center; justify-content: center; flex: none; }
.view-on { background: #c6c6c6; margin-left: 32px; }
.zminus { width: 6px; height: 2px; background: #555; margin-left: 6px; }
.zslider { width: 100px; height: 1px; background: #888; margin-left: 4px; position: relative; }
.zthumb { position: absolute; left: 48px; top: -6px; width: 4px; height: 13px; background: #666; }
.zplus { width: 8px; height: 8px; margin-left: 5px; background: linear-gradient(#555,#555) center/8px 2px no-repeat, linear-gradient(#555,#555) center/2px 8px no-repeat; }
.zoomval { margin-left: 15px; }

/* Dialog */
.dialog { position: absolute; left: 312px; top: 98px; width: 382px; height: 402px; background: #f0f0f0; border: 1px solid #2b88d8; box-shadow: 0 3px 14px rgba(0,0,0,.35); color: #222; display: flex; flex-direction: column; }
.dlg-title { height: 30px; background: #fff; display: flex; align-items: center; padding-left: 8px; flex: none; }
.dlg-name { flex: 1; letter-spacing: -1.100px; }
.dlg-help { font-size: 14px; margin-right: 36px; }
.dlg-close { margin-right: 17px; }
.dlg-body { padding: 0 6px; flex: 1; display: flex; flex-direction: column; }
.dlg-label { line-height: 16px; color: #222; letter-spacing: -.850px; }
.l-top { margin-top: 11px; height: 20px; }
.rule-list { list-style: none; margin: 0; padding: 0 1px 2px; height: 126px; border: 2px solid #6d6d6d; background: #fff; flex: none; }
.rule-list li { height: 20px; padding: 1px 0 0 7px; display: flex; align-items: center; border-bottom: 1px solid #f0f0f0; white-space: nowrap; letter-spacing: -1px; }
.fw { font-feature-settings: normal; }
.arr { width: 9px; height: 7px; margin-right: 4px; background: linear-gradient(#111,#111) right center/5px 1px no-repeat; position: relative; flex: none; }
.arr::before { content: ""; position: absolute; left: 0; top: .5px; border: 3px solid transparent; border-left: 5px solid #111; border-right: 0; }
.rule-list li.picked { background: #e2e1e6; border-bottom: 0; }
.l-edit { margin-top: 15px; height: 19px; }
.rule-box { height: 140px; border: 1px solid #7a7a7a; background: #fff; flex: none; display: flex; flex-direction: column; }
.formula-label { font-weight: 700; margin: 8px 0 0 9px; line-height: 16px; height: 22px; letter-spacing: -.150px; }
.formula-input { margin: 0 11px 0 8px; height: 23px; border: 1px solid #a9a9a9; display: flex; align-items: center; justify-content: space-between; flex: none; padding-left: 3px; }
.formula-text { letter-spacing: .700px; font-size: 12.500px; }
.ref-btn { width: 22px; height: 23px; margin-right: -1px; background: #e1e1e1; border: 1px solid #a9a9a9; display: flex; align-items: center; justify-content: center; }
.rule-sep { height: 1px; background: #cfcfcf; margin: 19px 1px 0; flex: none; }
.preview-row { display: flex; align-items: center; padding: 19px 0 0 9px; }
.preview-label { font-weight: 700; width: 63px; flex: none; letter-spacing: -1px; }
.preview-box { width: 200px; height: 40px; background: #fff; border: 1px solid #666; color: #f5304f; font-size: 14px; letter-spacing: .9px; font-feature-settings: normal; display: flex; align-items: center; justify-content: center; flex: none; }
.fmt-btn { width: 73px; height: 25px; margin-left: 10px; border: 2px solid #0078d7; background: #e1e1e1; padding: 0; display: flex; align-items: center; justify-content: center; flex: none; outline: 1px dotted #111; outline-offset: -3px; letter-spacing: .5px; }
.dlg-actions { display: flex; justify-content: flex-end; padding: 5px 7px 0 0; align-items: flex-start; gap: 12px; }
.btn { display: flex; align-items: center; justify-content: center; color: #222; }
.ok { width: 72px; height: 23px; background: #e5f1fb; outline: 6px solid #f92c0c; border-radius: 1px; }
.cancel { width: 73px; height: 25px; background: #e1e1e1; border: 1px solid #adadad; letter-spacing: -1.200px; }
.step-badge { position: absolute; left: 537px; top: 511px; width: 39px; height: 39px; border-radius: 50%; background: #fff; border: 3px solid #f0370f; box-shadow: 0 0 0 2px #fff, 0 1px 4px 2px rgba(0,0,0,.3); color: #f0370f; font: 700 28px/32px "Liberation Sans", sans-serif; letter-spacing: -2.500px; text-align: center; padding-right: 2px; }
```
